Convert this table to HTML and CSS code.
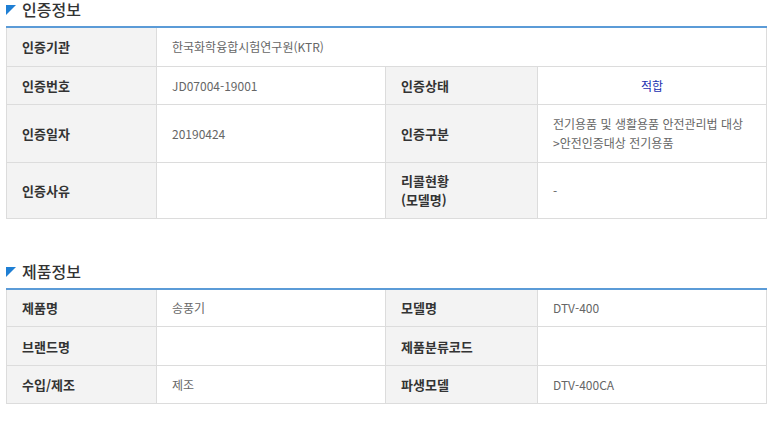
FILE: index.html
```html
<!DOCTYPE html>
<html lang="ko">
<head>
<meta charset="utf-8">
<title>인증정보</title>
<link rel="stylesheet" href="styles.css">
</head>
<body>
<div class="page">
  <section class="block">
    <h2 class="title"><span class="mark"></span>인증정보</h2>
    <table class="info">
      <colgroup><col class="c1"><col class="c2"><col class="c3"><col class="c4"></colgroup>
      <tr class="r39">
        <th>인증기관</th>
        <td colspan="3">한국화학융합시험연구원(KTR)</td>
      </tr>
      <tr class="r38">
        <th>인증번호</th>
        <td>JD07004-19001</td>
        <th>인증상태</th>
        <td class="status">적합</td>
      </tr>
      <tr class="r58">
        <th>인증일자</th>
        <td>20190424</td>
        <th>인증구분</th>
        <td>전기용품 및 생활용품 안전관리법 대상<br>&gt;안전인증대상 전기용품</td>
      </tr>
      <tr class="r56">
        <th>인증사유</th>
        <td></td>
        <th>리콜현황<br>(모델명)</th>
        <td>-</td>
      </tr>
    </table>
  </section>
  <section class="block">
    <h2 class="title"><span class="mark"></span>제품정보</h2>
    <table class="info">
      <colgroup><col class="c1"><col class="c2"><col class="c3"><col class="c4"></colgroup>
      <tr class="r38">
        <th>제품명</th>
        <td>송풍기</td>
        <th>모델명</th>
        <td>DTV-400</td>
      </tr>
      <tr class="r39">
        <th>브랜드명</th>
        <td></td>
        <th>제품분류코드</th>
        <td></td>
      </tr>
      <tr class="r38">
        <th>수입/제조</th>
        <td>제조</td>
        <th>파생모델</th>
        <td>DTV-400CA</td>
      </tr>
    </table>
  </section>
</div>
</body>
</html>
```
FILE: styles.css
```css
html, body {
  margin: 0;
  padding: 0;
  background: #fff;
}
body {
  font-family: "Noto Sans CJK KR", "Noto Sans", sans-serif;
  color: #333;
}
.page {
  padding: 0 9px 0 6px;
}
.block + .block {
  margin-top: 43px;
}
.title {
  display: flex;
  align-items: flex-start;
  gap: 6px;
  margin: 0;
  padding-bottom: 8px;
  font-size: 16px;
  font-weight: 500;
  color: #333;
  line-height: 18px;
}
.mark {
  flex: none;
  width: 0;
  height: 0;
  border-top: 10px solid #1f7fd4;
  border-right: 10px solid transparent;
  margin-top: 5px;
}
.info {
  width: 760px;
  border-collapse: collapse;
  table-layout: fixed;
  font-size: 12px;
}
.c1 { width: 150px; }
.c2 { width: 229px; }
.c3 { width: 152px; }
.c4 { width: 229px; }
.info th,
.info td {
  border: 1px solid #dcdcdc;
  padding: 0 15px;
  line-height: 19px;
  vertical-align: middle;
  text-align: left;
}
.info tr:first-child th,
.info tr:first-child td {
  border-top: 2px solid #5b9bd7;
}
.info th {
  background: #f3f3f3;
  font-size: 13px;
  font-weight: 700;
  color: #333;
}
.info td {
  color: #666;
  background: #fff;
}
.info td.status {
  text-align: center;
  color: #1a2fb0;
}
.r38 { height: 38px; }
.r39 { height: 39px; }
.r56 { height: 56px; }
.r58 { height: 58px; }
```
